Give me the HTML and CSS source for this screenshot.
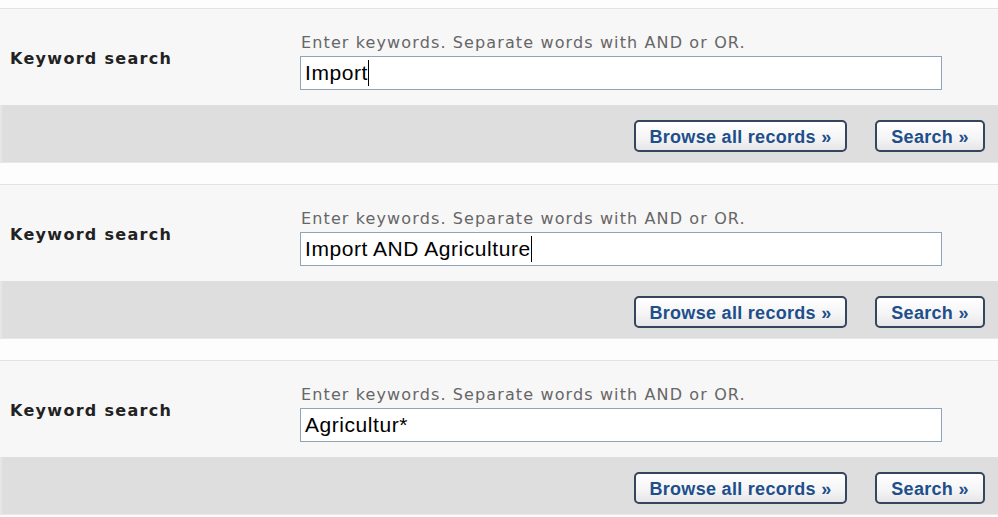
FILE: index.html
```html
<!DOCTYPE html>
<html>
<head>
<meta charset="utf-8">
<link rel="stylesheet" href="styles.css">
</head>
<body>
<div class="panel">
  <div class="form">
    <div class="label">Keyword search</div>
    <div class="field">
      <div class="hint">Enter keywords. Separate words with AND or OR.</div>
      <div class="input"><span class="value">Import</span><span class="caret"></span></div>
    </div>
  </div>
  <div class="bar">
    <button class="btn btn-browse">Browse all records »</button>
    <button class="btn btn-search">Search »</button>
  </div>
</div>
<div class="panel">
  <div class="form">
    <div class="label">Keyword search</div>
    <div class="field">
      <div class="hint">Enter keywords. Separate words with AND or OR.</div>
      <div class="input"><span class="value">Import AND Agriculture</span><span class="caret"></span></div>
    </div>
  </div>
  <div class="bar">
    <button class="btn btn-browse">Browse all records »</button>
    <button class="btn btn-search">Search »</button>
  </div>
</div>
<div class="panel">
  <div class="form">
    <div class="label">Keyword search</div>
    <div class="field">
      <div class="hint">Enter keywords. Separate words with AND or OR.</div>
      <div class="input"><span class="value">Agricultur*</span></div>
    </div>
  </div>
  <div class="bar">
    <button class="btn btn-browse">Browse all records »</button>
    <button class="btn btn-search">Search »</button>
  </div>
</div>
</body>
</html>
```
FILE: styles.css
```css
html, body {
  margin: 0;
  padding: 0;
  background: #fdfdfd;
}
body {
  width: 998px;
  height: 517px;
  overflow: hidden;
}
.panel {
  padding-top: 8px;
  height: 168px;
}
.form {
  display: flex;
  height: 96px;
  border-top: 1px solid #e2e2e2;
  background: #f7f7f7;
}
.label {
  width: 290px;
  padding-left: 10px;
  padding-top: 42px;
  font-family: "DejaVu Sans", Verdana, sans-serif;
  font-weight: bold;
  font-size: 16px;
  line-height: 16px;
  letter-spacing: 1.3px;
  color: #222;
}
.field {
  padding-top: 26px;
}
.hint {
  padding-left: 1px;
  font-family: "DejaVu Sans", Verdana, sans-serif;
  font-size: 16px;
  line-height: 16px;
  letter-spacing: 1.12px;
  color: #666;
}
.input {
  box-sizing: border-box;
  margin-top: 5px;
  width: 642px;
  height: 34px;
  border: 1px solid #8ea5bd;
  background: #fff;
  display: flex;
  align-items: center;
  padding-left: 4px;
  font-family: "Liberation Sans", Arial, sans-serif;
  font-size: 21px;
  letter-spacing: 0.55px;
  color: #000;
}
.caret {
  width: 1px;
  height: 26px;
  background: #000;
}
.bar {
  height: 58px;
  box-sizing: border-box;
  background: #dedede;
  display: flex;
  justify-content: flex-end;
  align-items: flex-start;
  padding-top: 15px;
  padding-right: 13px;
  gap: 28px;
  box-shadow: inset 2px 0 0 #e6e6e6, inset 0 -1px 0 #e8e8e8;
}
.btn {
  box-sizing: border-box;
  height: 32px;
  border: 2px solid #34455d;
  border-radius: 5px;
  background: linear-gradient(#ffffff, #f4f4f4 60%, #e6e6e6);
  font-family: "Liberation Sans", Arial, sans-serif;
  font-weight: bold;
  font-size: 18px;
  letter-spacing: 0.3px;
  color: #1e4f8c;
  padding: 2px 0 0 0;
  text-align: center;
}
.btn-browse {
  width: 213px;
}
.btn-search {
  width: 110px;
}
```
